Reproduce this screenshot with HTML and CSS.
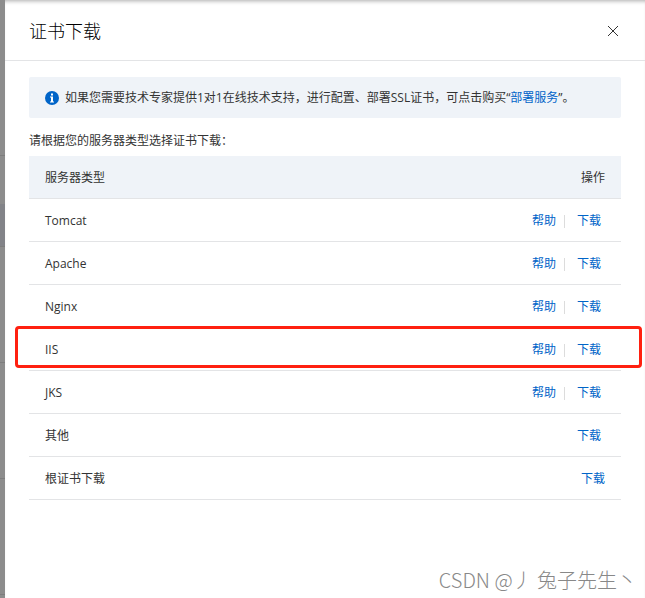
FILE: index.html
```
<!DOCTYPE html>
<html lang="zh-CN">
<head>
  <meta charset="utf-8"/>
  <meta name="viewport" content="width=device-width, initial-scale=1.0"/>
  <title>证书下载</title>
  <link rel="stylesheet" href="styles.css">
</head>
<body>
  <!-- 遮罩下的列表 -->
  <div class="backdrop">
    <div class="backdrop-head"></div>
    <div class="backdrop-gap"></div>
    <div class="backdrop-active"></div>
    <div class="backdrop-row"></div>
    <div class="backdrop-row"></div>
    <div class="backdrop-row"></div>
  </div>
  <main class="drawer">
    <header class="drawer-header">
      <h1>证书下载</h1>
      <button class="close-btn" type="button" aria-label="关闭">
        <svg width="12" height="12" viewBox="0 0 12 12"><path d="M1 1l10 10M11 1L1 11" fill="none" stroke="#333" stroke-width="1"/></svg>
      </button>
    </header>
    <div class="drawer-body">
      <div class="notice">
        <svg class="notice-icon" width="14" height="14" viewBox="0 0 14 14">
          <circle cx="7" cy="7" r="7" fill="#0064c8"/>
          <path d="M6 2.5h2v2H6zM5 5.5h3v5h1v1H5v-1h1v-4H5z" fill="#fff"/>
        </svg>
        <p>如果您需要技术专家提供1对1在线技术支持，进行配置、部署SSL证书，可点击购买“<a href="#">部署服务</a>”。</p>
      </div>
      <p class="intro">请根据您的服务器类型选择证书下载：</p>
      <table class="cert-table">
        <thead>
          <tr><th scope="col">服务器类型</th><th scope="col" class="actions">操作</th></tr>
        </thead>
        <tbody>
          <tr><td>Tomcat</td><td class="actions"><a class="action" href="#">帮助</a><a class="action" href="#">下载</a></td></tr>
          <tr><td>Apache</td><td class="actions"><a class="action" href="#">帮助</a><a class="action" href="#">下载</a></td></tr>
          <tr><td>Nginx</td><td class="actions"><a class="action" href="#">帮助</a><a class="action" href="#">下载</a></td></tr>
          <tr class="marked"><td>IIS</td><td class="actions"><a class="action" href="#">帮助</a><a class="action" href="#">下载</a></td></tr>
          <tr><td>JKS</td><td class="actions"><a class="action" href="#">帮助</a><a class="action" href="#">下载</a></td></tr>
          <tr><td>其他</td><td class="actions"><a class="action" href="#">下载</a></td></tr>
          <tr><td>根证书下载</td><td class="actions"><a href="#">下载</a></td></tr>
        </tbody>
      </table>
    </div>
    <footer class="watermark">CSDN @丿 兔子先生丶</footer>
  </main>
</body>
</html>
```

FILE: styles.css
```
* { box-sizing: border-box; }
html, body { margin: 0; padding: 0; }
body { display: flex; min-height: 100vh; background: #fff; color: #333; font-family: "Open Sans", "Noto Sans CJK SC", sans-serif; font-size: 12px; line-height: 18px; }
h1, p { margin: 0; }
a { color: #0064c8; text-decoration: none; }
a:hover { text-decoration: underline; }

.backdrop { width: 5px; flex: none; background: #8c8c8c; }
.backdrop-head { height: 156px; border-bottom: 1px solid #7d7d7d; }
.backdrop-gap { height: 48px; }
.backdrop-active { height: 43px; background: #828388; border-bottom: 1px solid #7d7d7d; }
.backdrop-row { height: 116px; border-bottom: 1px solid #7d7d7d; }

.drawer { flex: 1; min-width: 0; display: flex; flex-direction: column; box-shadow: inset 0 4px 4px -3px #aaa; }
.drawer-header { display: flex; align-items: center; justify-content: space-between; height: 61px; padding: 2px 24px 0; border-bottom: 1px solid #e3e4e6; }
h1 { font-size: 18px; line-height: 28px; font-weight: 300; color: #000; }
.close-btn { display: flex; padding: 2px; border: none; background: none; cursor: pointer; }
.drawer-body { padding: 16px 24px; }

.notice { display: flex; align-items: center; gap: 6px; min-height: 41px; padding: 8px 16px; background: #eff3f8; border-radius: 2px; }
.notice-icon { flex: none; }
.intro { padding: 14px 0 6px; }

.cert-table { width: 100%; border-collapse: separate; border-spacing: 0; }
th, td { height: 43px; padding: 2px 16px 0; border-bottom: 1px solid #e3e4e6; text-align: left; font-weight: 400; }
th { background: #eff3f8; }
.actions { text-align: right; }
.action { display: inline-block; padding: 0 4px 0 12px; }
.action + .action { position: relative; margin-left: 4px; padding-left: 13px; }
.action + .action::before { content: ""; position: absolute; left: 0; top: 3px; height: 13px; border-left: 1px solid #dcdcdc; }

/* 红框标记当前行 */
.marked { position: relative; }
.marked::after { content: ""; position: absolute; top: -2px; right: -21px; bottom: 3px; left: -14px; border: 3px solid #ff2010; border-radius: 4px; pointer-events: none; }

.watermark { margin-top: auto; padding: 0 8px 4px; text-align: right; font-family: "Noto Sans CJK SC", sans-serif; font-size: 20px; line-height: 28px; font-weight: 300; color: #888; }
```
